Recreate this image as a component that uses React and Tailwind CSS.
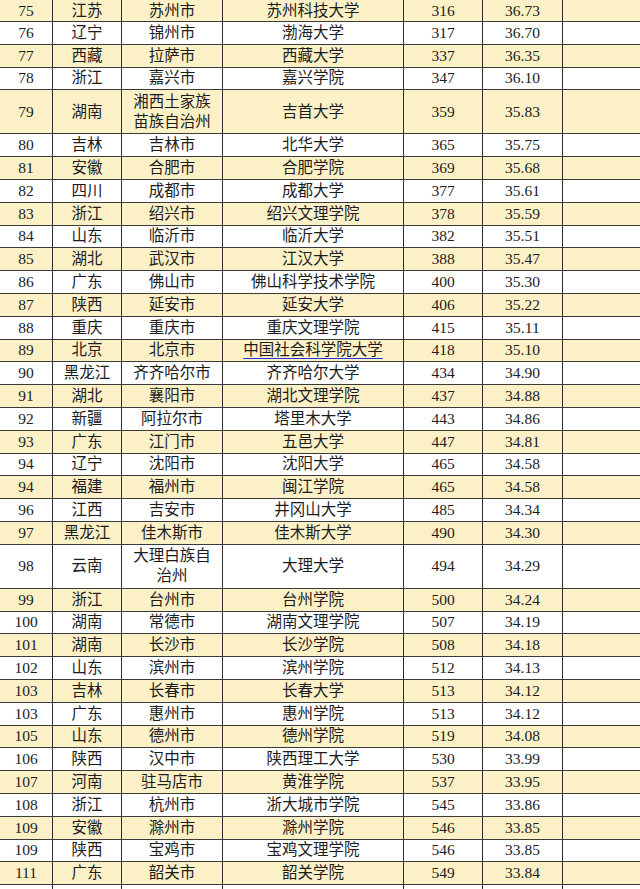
const rows = [
  ['75', '江苏', '苏州市', '苏州科技大学', '316', '36.73'],
  ['76', '辽宁', '锦州市', '渤海大学', '317', '36.70'],
  ['77', '西藏', '拉萨市', '西藏大学', '337', '36.35'],
  ['78', '浙江', '嘉兴市', '嘉兴学院', '347', '36.10'],
  ['79', '湖南', ['湘西土家族', '苗族自治州'], '吉首大学', '359', '35.83'],
  ['80', '吉林', '吉林市', '北华大学', '365', '35.75'],
  ['81', '安徽', '合肥市', '合肥学院', '369', '35.68'],
  ['82', '四川', '成都市', '成都大学', '377', '35.61'],
  ['83', '浙江', '绍兴市', '绍兴文理学院', '378', '35.59'],
  ['84', '山东', '临沂市', '临沂大学', '382', '35.51'],
  ['85', '湖北', '武汉市', '江汉大学', '388', '35.47'],
  ['86', '广东', '佛山市', '佛山科学技术学院', '400', '35.30'],
  ['87', '陕西', '延安市', '延安大学', '406', '35.22'],
  ['88', '重庆', '重庆市', '重庆文理学院', '415', '35.11'],
  ['89', '北京', '北京市', '中国社会科学院大学', '418', '35.10', true],
  ['90', '黑龙江', '齐齐哈尔市', '齐齐哈尔大学', '434', '34.90'],
  ['91', '湖北', '襄阳市', '湖北文理学院', '437', '34.88'],
  ['92', '新疆', '阿拉尔市', '塔里木大学', '443', '34.86'],
  ['93', '广东', '江门市', '五邑大学', '447', '34.81'],
  ['94', '辽宁', '沈阳市', '沈阳大学', '465', '34.58'],
  ['94', '福建', '福州市', '闽江学院', '465', '34.58'],
  ['96', '江西', '吉安市', '井冈山大学', '485', '34.34'],
  ['97', '黑龙江', '佳木斯市', '佳木斯大学', '490', '34.30'],
  ['98', '云南', ['大理白族自', '治州'], '大理大学', '494', '34.29'],
  ['99', '浙江', '台州市', '台州学院', '500', '34.24'],
  ['100', '湖南', '常德市', '湖南文理学院', '507', '34.19'],
  ['101', '湖南', '长沙市', '长沙学院', '508', '34.18'],
  ['102', '山东', '滨州市', '滨州学院', '512', '34.13'],
  ['103', '吉林', '长春市', '长春大学', '513', '34.12'],
  ['103', '广东', '惠州市', '惠州学院', '513', '34.12'],
  ['105', '山东', '德州市', '德州学院', '519', '34.08'],
  ['106', '陕西', '汉中市', '陕西理工大学', '530', '33.99'],
  ['107', '河南', '驻马店市', '黄淮学院', '537', '33.95'],
  ['108', '浙江', '杭州市', '浙大城市学院', '545', '33.86'],
  ['109', '安徽', '滁州市', '滁州学院', '546', '33.85'],
  ['109', '陕西', '宝鸡市', '宝鸡文理学院', '546', '33.85'],
  ['111', '广东', '韶关市', '韶关学院', '549', '33.84'],
  ['', '', '', '', '', ''],
]

function Cell({ children, first }) {
  return (
    <div className={`flex items-center justify-center text-center leading-[20px] ${first ? '' : 'border-l border-[#2e2e2e]'}`}>
      {children}
    </div>
  )
}

export default function App() {
  return (
    <div className="w-[640px] h-[889px] overflow-hidden bg-white text-[#1c1c1c] text-[15.5px]"
      style={{ fontFamily: '"Liberation Serif", "Noto Sans CJK SC", serif' }}>
      {rows.map((r, i) => {
        const double = Array.isArray(r[2])
        const h = i === 0 ? 'h-[22px]' : double ? 'h-[44px]' : 'h-[22.8px]'
        const bg = i % 2 === 0 ? 'bg-[#fcf0c7]' : 'bg-white'
        return (
          <div key={i} className={`grid grid-cols-[52px_69px_101px_181px_79px_80px_1fr] border-b border-[#3a3a3a] box-border ${h} ${bg}`}>
            <Cell first>{r[0]}</Cell>
            <Cell>{r[1]}</Cell>
            <Cell>{double ? <span>{r[2][0]}<br />{r[2][1]}</span> : r[2]}</Cell>
            <Cell>
              {r[6] ? <span className="underline decoration-[#2233dd] underline-offset-[3px]">{r[3]}</span> : r[3]}
            </Cell>
            <Cell>{r[4]}</Cell>
            <Cell>{r[5]}</Cell>
            <Cell />
          </div>
        )
      })}
    </div>
  )
}
